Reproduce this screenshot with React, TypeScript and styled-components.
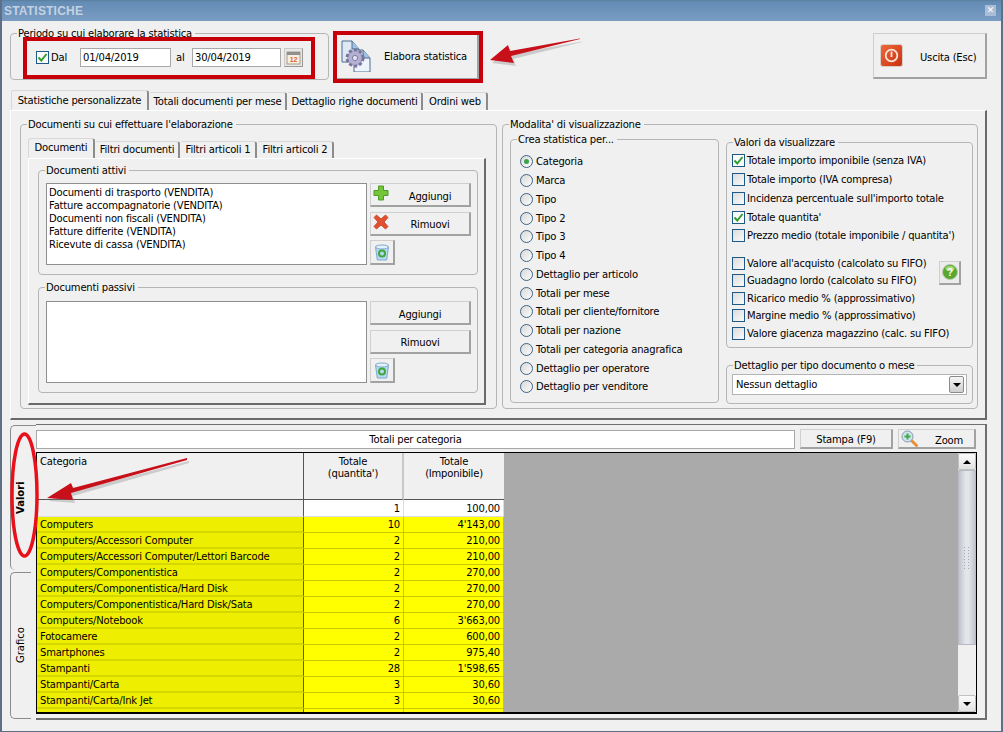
import React from 'react';
import styled, { createGlobalStyle } from 'styled-components';

const FONT = '"DejaVu Sans", "Liberation Sans", sans-serif';

const GlobalStyle = createGlobalStyle`
  * { box-sizing: border-box; }
  html, body { margin: 0; padding: 0; background: #f0f0f0; }
  body { font-family: ${FONT}; font-size: 10px; letter-spacing: -0.2px; color: #000; overflow: hidden; }
`;

const radioLabels = [
  'Categoria',
  'Marca',
  'Tipo',
  'Tipo 2',
  'Tipo 3',
  'Tipo 4',
  'Dettaglio per articolo',
  'Totali per mese',
  'Totali per cliente/fornitore',
  'Totali per nazione',
  'Totali per categoria anagrafica',
  'Dettaglio per operatore',
  'Dettaglio per venditore',
];

const valoriTop = [
  { label: 'Totale importo imponibile (senza IVA)', checked: true },
  { label: 'Totale importo (IVA compresa)', checked: false },
  { label: "Incidenza percentuale sull'importo totale", checked: false },
  { label: "Totale quantita'", checked: true },
  { label: "Prezzo medio (totale imponibile / quantita')", checked: false },
];

const valoriBottom = [
  "Valore all'acquisto (calcolato su FIFO)",
  'Guadagno lordo (calcolato su FIFO)',
  'Ricarico medio % (approssimativo)',
  'Margine medio % (approssimativo)',
  'Valore giacenza magazzino (calc. su FIFO)',
];

const documentiAttivi = [
  'Documenti di trasporto (VENDITA)',
  'Fatture accompagnatorie (VENDITA)',
  'Documenti non fiscali (VENDITA)',
  'Fatture differite (VENDITA)',
  'Ricevute di cassa (VENDITA)',
];

const rows = [
  ['Computers', '10', "4'143,00"],
  ['Computers/Accessori Computer', '2', '210,00'],
  ['Computers/Accessori Computer/Lettori Barcode', '2', '210,00'],
  ['Computers/Componentistica', '2', '270,00'],
  ['Computers/Componentistica/Hard Disk', '2', '270,00'],
  ['Computers/Componentistica/Hard Disk/Sata', '2', '270,00'],
  ['Computers/Notebook', '6', "3'663,00"],
  ['Fotocamere', '2', '600,00'],
  ['Smartphones', '2', '975,40'],
  ['Stampanti', '28', "1'598,65"],
  ['Stampanti/Carta', '3', '30,60'],
  ['Stampanti/Carta/Ink Jet', '3', '30,60'],
  ['Stampanti/Consumabili', '25', '875,90'],
];

const GearDocIcon = () => (
  <svg width="32" height="32" viewBox="0 0 32 32">
    <path d="M2 1h10l7 8v13H2z" fill="#dfe9f6" stroke="#4e6d8f" />
    <path d="M12 1v8h7" fill="#9fc4e6" stroke="#4e6d8f" />
    <path d="M14 10h9l7 8v14H14z" fill="#eef4fb" stroke="#4e6d8f" />
    <path d="M23 10v8h7" fill="#9fc4e6" stroke="#4e6d8f" />
    <circle cx="15" cy="18" r="8" fill="#a9a6cb" stroke="#77749c" strokeWidth="3" strokeDasharray="3 2.2" />
    <circle cx="15" cy="18" r="6.5" fill="#b3b0d2" />
    <circle cx="15" cy="18" r="2.6" fill="#e4e3f0" stroke="#7f7ca5" />
  </svg>
);

const PowerIcon = () => (
  <svg width="23" height="23" viewBox="0 0 23 23">
    <defs>
      <linearGradient id="pw" x1="0" y1="0" x2="1" y2="1">
        <stop offset="0" stopColor="#f0683a" />
        <stop offset="1" stopColor="#c9300f" />
      </linearGradient>
    </defs>
    <rect x="0.5" y="0.5" width="22" height="22" rx="2.5" fill="url(#pw)" stroke="#d8d0c8" />
    <circle cx="11.5" cy="11.5" r="5.8" fill="none" stroke="#fbe6dc" strokeWidth="1.8" />
    <rect x="10.6" y="7.5" width="1.8" height="5.5" fill="#fbe6dc" />
  </svg>
);

const PlusIcon = () => (
  <svg width="16" height="16" viewBox="0 0 16 16">
    <path d="M5.5 1h5v4.500H15v5h-4.500V15h-5v-4.500H1v-5h4.500z" fill="#73c63a" stroke="#4d9a27" />
  </svg>
);

const CrossIcon = () => (
  <svg width="16" height="16" viewBox="0 0 16 16">
    <path d="M1 3.500 3.500 1 8 5l4.500-4L15 3.500 11 8l4 4.500-2.500 2.500L8 11l-4.500 4L1 12.500 5 8z" fill="#e2512f" stroke="#c23a1e" strokeWidth="0.8" />
  </svg>
);

const BinIcon = () => (
  <svg width="16" height="17" viewBox="0 0 16 17">
    <path d="M1.500 3h13l-1.800 13H3.300z" fill="#b7d9f3" stroke="#7da9cc" />
    <ellipse cx="8" cy="3" rx="6.500" ry="2" fill="#e6f2fb" stroke="#7da9cc" />
    <circle cx="8" cy="9.500" r="3" fill="none" stroke="#3fa83a" strokeWidth="2" />
  </svg>
);

const ZoomIcon = () => (
  <svg width="17" height="17" viewBox="0 0 17 17">
    <path d="M10 10l5.500 5.500" stroke="#e6913a" strokeWidth="3" strokeLinecap="round" />
    <circle cx="6.500" cy="6.500" r="5.500" fill="#cfe3f2" stroke="#8398aa" />
    <path d="M5.500 3.500h2v2h2v2h-2v2h-2v-2h-2v-2h2z" fill="#3cb043" />
  </svg>
);

const HelpIcon = () => (
  <svg width="16" height="16" viewBox="0 0 16 16">
    <circle cx="8" cy="8" r="7.500" fill="#5aa72e" stroke="#b7c9ad" />
    <ellipse cx="8" cy="4.500" rx="4.500" ry="2.500" fill="#a4d97c" />
    <text x="8" y="12" textAnchor="middle" fontSize="10" fontWeight="700" fill="#fff" fontFamily="Liberation Sans, sans-serif">?</text>
  </svg>
);

const CalendarIcon = () => (
  <svg width="15" height="15" viewBox="0 0 15 15">
    <rect x="1" y="2" width="13" height="12" fill="#f7efe2" stroke="#a89a88" />
    <rect x="1" y="2" width="13" height="3" fill="#8f8f8f" />
    <text x="7.500" y="12" textAnchor="middle" fontSize="7" fontWeight="700" fill="#e0662b" fontFamily="Liberation Sans, sans-serif">12</text>
  </svg>
);

const CheckMark = () => (
  <svg width="11" height="11" viewBox="0 0 11 11">
    <path d="M1.500 5.500 4.300 8.500 9.500 2" fill="none" stroke="#2f9e2f" strokeWidth="2" />
  </svg>
);

const GripDots = () => (
  <svg width="8" height="22" viewBox="0 0 8 22">
    {[0, 1, 2, 3, 4, 5, 6, 7].map((i) => (
      <g key={i} fill="#a4a7b0">
        <rect x="1" y={i * 3} width="1" height="1" />
        <rect x="5" y={i * 3} width="1" height="1" />
      </g>
    ))}
  </svg>
);

type GroupProps = {
  legend: string;
  width: number;
  height: number;
  pad: string;
  children?: React.ReactNode;
};

const Group: React.FC<GroupProps> = ({ legend, width, height, pad, children }) => (
  <GroupBox $width={width} $height={height}>
    <Legend>{legend}</Legend>
    <GroupBody $pad={pad}>{children}</GroupBody>
  </GroupBox>
);

export default function App() {
  return (
    <Page>
      <GlobalStyle />
      <TitleBar>
        <TitleText>STATISTICHE</TitleText>
        <CloseBox>✕</CloseBox>
      </TitleBar>
      <Body>
        <TopRow>
          <Group legend="Periodo su cui elaborare la statistica" width={319} height={53} pad="8px 0 0 25px">
            <PeriodRow>
              <CheckBox $checked>
                <CheckMark />
              </CheckBox>
              <DalLabel>Dal</DalLabel>
              <DateInput $width={91}>01/04/2019</DateInput>
              <AlLabel>al</AlLabel>
              <DateInput $width={89}>30/04/2019</DateInput>
              <CalendarButton>
                <CalendarIcon />
              </CalendarButton>
            </PeriodRow>
          </Group>
          <ElaboraButton>
            <GearDocIcon />
            <span>Elabora statistica</span>
          </ElaboraButton>
          <UscitaButton>
            <PowerIcon />
            <span>Uscita (Esc)</span>
          </UscitaButton>
        </TopRow>

        <MainTabs>
          <MainTab $active $width={138}>Statistiche personalizzate</MainTab>
          <MainTab $width={138}>Totali documenti per mese</MainTab>
          <MainTab $width={136}>Dettaglio righe documenti</MainTab>
          <MainTab $width={65}>Ordini web</MainTab>
        </MainTabs>
        <MainPage>
          <Group legend="Documenti su cui effettuare l'elaborazione" width={477} height={291} pad="7px 0 0 7px">
            <InnerTabs>
              <InnerTab $active $width={67}>Documenti</InnerTab>
              <InnerTab $width={85}>Filtri documenti</InnerTab>
              <InnerTab $width={77}>Filtri articoli 1</InnerTab>
              <InnerTab $width={77}>Filtri articoli 2</InnerTab>
            </InnerTabs>
            <InnerPage>
              <Group legend="Documenti attivi" width={440} height={111} pad="6px 0 0 7px">
                <DocRow>
                  <ListBox>
                    {documentiAttivi.map((d) => (
                      <div key={d}>{d}</div>
                    ))}
                  </ListBox>
                  <ButtonColumn>
                    <ActionButton $withIcon>
                      <IconSlot><PlusIcon /></IconSlot>
                      Aggiungi
                    </ActionButton>
                    <ActionButton $withIcon>
                      <IconSlot><CrossIcon /></IconSlot>
                      Rimuovi
                    </ActionButton>
                    <BinButton><BinIcon /></BinButton>
                  </ButtonColumn>
                </DocRow>
              </Group>
              <Group legend="Documenti passivi" width={440} height={112} pad="7px 0 0 7px">
                <DocRow>
                  <ListBox />
                  <ButtonColumn>
                    <ActionButton>Aggiungi</ActionButton>
                    <ActionButton>Rimuovi</ActionButton>
                    <BinButton><BinIcon /></BinButton>
                  </ButtonColumn>
                </DocRow>
              </Group>
            </InnerPage>
          </Group>

          <Group legend="Modalita' di visualizzazione" width={476} height={291} pad="2px 0 0 7px">
            <ModeColumns>
              <Group legend="Crea statistica per..." width={209} height={270} pad="6.4px 0 0 9px">
                <OptionList $step={18.75}>
                  {radioLabels.map((label, i) => (
                    <OptionRow key={label}>
                      <Radio $selected={i === 0} />
                      {label}
                    </OptionRow>
                  ))}
                </OptionList>
              </Group>
              <RightColumn>
                <Group legend="Valori da visualizzare" width={247} height={212} pad="2.4px 0 0 5px">
                  <OptionList $step={18.75}>
                    {valoriTop.map((v) => (
                      <OptionRow key={v.label}>
                        <CheckBox $checked={v.checked}>{v.checked && <CheckMark />}</CheckBox>
                        {v.label}
                      </OptionRow>
                    ))}
                  </OptionList>
                  <FifoBlock>
                    <OptionList $step={17.5} $width={207}>
                      {valoriBottom.map((label) => (
                        <OptionRow key={label}>
                          <CheckBox />
                          {label}
                        </OptionRow>
                      ))}
                    </OptionList>
                    <HelpButton><HelpIcon /></HelpButton>
                  </FifoBlock>
                </Group>
                <Group legend="Dettaglio per tipo documento o mese" width={247} height={45} pad="2px 0 0 5px">
                  <Combo>
                    Nessun dettaglio
                    <ComboArrow>
                      <Triangle />
                    </ComboArrow>
                  </Combo>
                </Group>
              </RightColumn>
            </ModeColumns>
          </Group>
        </MainPage>

        <BottomPanel>
          <Rail>
            <RailTab $active>Valori</RailTab>
            <RailTab>Grafico</RailTab>
          </Rail>
          <ResultArea>
            <ResultToolbar>
              <ResultTitle>Totali per categoria</ResultTitle>
              <ToolButton $width={93}>Stampa (F9)</ToolButton>
              <ZoomButton>
                <ZoomIcon />
                <span>Zoom</span>
              </ZoomButton>
            </ResultToolbar>
            <GridFrame>
              <GridTable>
                <HeaderCell>Categoria</HeaderCell>
                <HeaderCell $center>Totale<br />(quantita')</HeaderCell>
                <HeaderCell $center>Totale<br />(Imponibile)</HeaderCell>
                <TotalLabel />
                <TotalCell>1</TotalCell>
                <TotalCell>100,00</TotalCell>
                {rows.map((r) => (
                  <React.Fragment key={r[0]}>
                    <NameCell>{r[0]}</NameCell>
                    <ValueCell>{r[1]}</ValueCell>
                    <ValueCell>{r[2]}</ValueCell>
                  </React.Fragment>
                ))}
              </GridTable>
              <GridEmpty />
              <ScrollBar>
                <ScrollButton><Triangle $up /></ScrollButton>
                <ScrollThumb><GripDots /></ScrollThumb>
                <ScrollTrack />
                <ScrollButton><Triangle /></ScrollButton>
              </ScrollBar>
            </GridFrame>
          </ResultArea>
        </BottomPanel>
      </Body>

      <RedFrame $left={23} $top={37} $width={292} $height={42} />
      <RedFrame $left={333} $top={31} $width={150} $height={52} />
      <Annotations width="1003" height="732" viewBox="0 0 1003 732">
        <g fill="#888" opacity="0.35" transform="translate(2 3)">
          <path d="M580 38.500 510 51l-2-6-18 15 24 3-3-7 69-17z" />
          <path d="M187 458 73 488l-2-5-24 15 26 2-2-7 116-33z" />
        </g>
        <path d="M580 38.500 510 51l-2-6-18 15 24 3-3-7 69-17z" fill="#c8101a" />
        <path d="M187 458 73 488l-2-5-24 15 26 2-2-7 116-33z" fill="#c8101a" />
        <ellipse cx="24.500" cy="495" rx="12.500" ry="61" fill="none" stroke="#e8101a" strokeWidth="3.500" />
      </Annotations>
    </Page>
  );
}

const Page = styled.div`
  position: relative;
  width: 1003px;
  height: 732px;
  background: #f0f0f0;
  border-left: 2px solid #5f6f84;
  border-right: 2px solid #5f6f84;
  border-bottom: 1px solid #5f6f84;
  overflow: hidden;
`;

const TitleBar = styled.div`
  height: 21px;
  margin: 0 -2px;
  padding: 0 7px 0 4px;
  display: flex;
  align-items: center;
  justify-content: space-between;
  background: linear-gradient(#58809f 0, #648cb5 2px, #7a9cc2 100%);
`;

const TitleText = styled.div`
  font-family: "Liberation Sans", sans-serif;
  font-size: 12px;
  font-weight: 700;
  letter-spacing: 0.2px;
  color: #c3d2e3;
`;

const CloseBox = styled.div`
  width: 11px;
  height: 11px;
  background: #a9bed6;
  color: #fff;
  font-size: 9px;
  line-height: 11px;
  font-weight: 700;
  text-align: center;
`;

const Body = styled.div`
  padding: 6px 14px 0 8px;
  display: flex;
  flex-direction: column;
`;

const TopRow = styled.div`
  display: flex;
  align-items: flex-end;
  height: 53px;
`;

const GroupBox = styled.fieldset<{ $width: number; $height: number }>`
  width: ${(p) => p.$width}px;
  height: ${(p) => p.$height}px;
  flex: none;
  margin: 0;
  padding: 0;
  min-width: 0;
  border: 1px solid #b5b5b5;
  border-radius: 4px;
`;

const GroupBody = styled.div<{ $pad: string }>`
  padding: ${(p) => p.$pad};
`;

const Legend = styled.legend`
  margin-left: 6px;
  padding: 0 3px 0 1px;
  height: 13px;
  line-height: 13px;
  white-space: nowrap;
`;

const PeriodRow = styled.div`
  display: flex;
  align-items: center;
  height: 19px;
`;

const CheckBox = styled.div<{ $checked?: boolean }>`
  width: 13px;
  height: 13px;
  flex: none;
  display: flex;
  align-items: center;
  justify-content: center;
  border: 1px solid #1e5a88;
  background: ${(p) => (p.$checked ? '#fbfbfb' : 'linear-gradient(135deg, #dcdcdc, #fafafa)')};
`;

const DalLabel = styled.span`
  margin-left: 2px;
  width: 29px;
`;

const AlLabel = styled.span`
  width: 21px;
  padding-left: 5px;
`;

const DateInput = styled.div<{ $width: number }>`
  width: ${(p) => p.$width}px;
  height: 19px;
  padding-left: 2px;
  line-height: 18px;
  flex: none;
  background: #fff;
  border: 1px solid #a8a8a8;
`;

const CalendarButton = styled.div`
  width: 19px;
  height: 19px;
  margin-left: 3px;
  display: flex;
  align-items: center;
  justify-content: center;
  background: #e8e8e8;
  border: 1px solid #c8c8c8;
  border-right-color: #999;
  border-bottom-color: #999;
`;

const RaisedButton = styled.div`
  display: flex;
  align-items: center;
  flex: none;
  background: #f0f0f0;
  border: 1px solid #cfcfcf;
  border-right: 2px solid #a2a2a2;
  border-bottom: 2px solid #a2a2a2;
`;

const ElaboraButton = styled(RaisedButton)`
  width: 144px;
  height: 47px;
  margin-left: 6px;
  padding-left: 4px;
  gap: 12px;
  span { white-space: nowrap; }
`;

const UscitaButton = styled(RaisedButton)`
  width: 114px;
  height: 46px;
  margin-left: auto;
  margin-bottom: 1px;
  padding-left: 6px;
  gap: 17px;
  span { white-space: nowrap; padding-top: 3px; }
`;

const MainTabs = styled.div`
  display: flex;
  align-items: flex-end;
  height: 20px;
  margin-top: 10px;
  padding-left: 1px;
`;

const MainTab = styled.div<{ $active?: boolean; $width: number }>`
  width: ${(p) => p.$width}px;
  height: ${(p) => (p.$active ? 20 : 18)}px;
  text-align: center;
  line-height: ${(p) => (p.$active ? 19 : 18)}px;
  white-space: nowrap;
  background: #f0f0f0;
  border-top: 1px solid #d8d8d8;
  border-left: 1px solid ${(p) => (p.$active ? '#d8d8d8' : '#f0f0f0')};
  border-right: 2px solid #8c8c8c;
  border-radius: 3px 3px 0 0;
`;

const MainPage = styled.div`
  width: 977px;
  height: 310px;
  padding: 7px 0 0 9px;
  display: flex;
  gap: 5px;
  border-top: 1px solid #fff;
  border-left: 1px solid #fff;
  border-right: 2px solid #6a6a6a;
  border-bottom: 2px solid #6a6a6a;
`;

const InnerTabs = styled.div`
  display: flex;
  align-items: flex-end;
  height: 20px;
`;

const InnerTab = styled.div<{ $active?: boolean; $width: number }>`
  width: ${(p) => p.$width}px;
  height: ${(p) => (p.$active ? 20 : 17)}px;
  text-align: center;
  line-height: ${(p) => (p.$active ? 17 : 16)}px;
  white-space: nowrap;
  background: #f0f0f0;
  border-top: 1px solid #d8d8d8;
  border-left: 1px solid ${(p) => (p.$active ? '#d8d8d8' : '#f0f0f0')};
  border-right: 2px solid #8c8c8c;
  border-radius: 3px 3px 0 0;
`;

const InnerPage = styled.div`
  width: 458px;
  height: 247px;
  padding: 5px 0 0 9px;
  display: flex;
  flex-direction: column;
  gap: 6px;
  border-top: 1px solid #fff;
  border-left: 1px solid #fff;
  border-right: 2px solid #6a6a6a;
  border-bottom: 2px solid #6a6a6a;
`;

const DocRow = styled.div`
  display: flex;
  gap: 3px;
`;

const ListBox = styled.div`
  width: 321px;
  height: 82px;
  flex: none;
  padding: 2px 2px;
  line-height: 13px;
  background: #fff;
  border: 1px solid #8f8f8f;
`;

const ButtonColumn = styled.div`
  display: flex;
  flex-direction: column;
  align-items: flex-start;
  gap: 4.500px;
`;

const ActionButton = styled(RaisedButton)<{ $withIcon?: boolean }>`
  position: relative;
  width: 101px;
  height: 24px;
  justify-content: center;
  padding-top: 3px;
  padding-left: ${(p) => (p.$withIcon ? 20 : 0)}px;
`;

const IconSlot = styled.span`
  position: absolute;
  left: 2px;
  top: 1px;
  display: flex;
`;

const BinButton = styled(RaisedButton)`
  width: 25px;
  height: 25px;
  justify-content: center;
`;

const ModeColumns = styled.div`
  display: flex;
  gap: 7px;
`;

const RightColumn = styled.div`
  display: flex;
  flex-direction: column;
  gap: 11px;
  margin-top: 3px;
`;

const OptionList = styled.div<{ $step: number; $width?: number }>`
  display: grid;
  grid-auto-rows: ${(p) => p.$step}px;
  ${(p) => (p.$width ? `width: ${p.$width}px; flex: none;` : '')}
`;

const OptionRow = styled.div`
  display: flex;
  align-items: center;
  gap: 2px;
  white-space: nowrap;
`;

const Radio = styled.div<{ $selected?: boolean }>`
  position: relative;
  width: 13px;
  height: 13px;
  margin-right: 1px;
  flex: none;
  border: 1px solid #3e6388;
  border-radius: 50%;
  background: linear-gradient(135deg, #d8d8d8, #fcfcfc);

  &::after {
    content: '';
    display: ${(p) => (p.$selected ? 'block' : 'none')};
    position: absolute;
    left: 3px;
    top: 3px;
    width: 5px;
    height: 5px;
    border-radius: 50%;
    background: #3ba24a;
  }
`;

const FifoBlock = styled.div`
  display: flex;
  align-items: flex-start;
  margin-top: 9.600px;
`;

const HelpButton = styled(RaisedButton)`
  width: 22px;
  height: 24px;
  margin-top: 6px;
  justify-content: center;
  background: #ececec;
`;

const Combo = styled.div`
  position: relative;
  width: 235px;
  height: 21px;
  padding-left: 3px;
  line-height: 20px;
  background: #fff;
  border: 1px solid #b4b4b4;
`;

const ComboArrow = styled.div`
  position: absolute;
  right: 2px;
  top: 1px;
  width: 15px;
  height: 17px;
  display: flex;
  align-items: center;
  justify-content: center;
  background: linear-gradient(#f6f6f6, #cfcfcf);
  border: 1px solid #8a8a8a;
  border-radius: 2px;
`;

const Triangle = styled.div<{ $up?: boolean }>`
  width: 0;
  height: 0;
  border-left: 4px solid transparent;
  border-right: 4px solid transparent;
  ${(p) => (p.$up ? 'border-bottom: 4px solid #000;' : 'border-top: 4px solid #000;')}
`;

const BottomPanel = styled.div`
  display: flex;
  width: 977px;
  height: 296px;
  margin-top: 4px;
`;

const Rail = styled.div`
  width: 26px;
  flex: none;
  display: flex;
  flex-direction: column;
  gap: 2px;
  padding-top: 1px;
`;

const RailTab = styled.div<{ $active?: boolean }>`
  writing-mode: vertical-rl;
  transform: rotate(180deg);
  width: ${(p) => (p.$active ? 26 : 21)}px;
  height: ${(p) => (p.$active ? 145 : 147)}px;
  text-align: center;
  line-height: 20px;
  letter-spacing: 0;
  font-weight: ${(p) => (p.$active ? 700 : 400)};
  background: #f0f0f0;
  border-right: 1px solid #8c8c8c;
  border-top: ${(p) => (p.$active ? 'none' : '1px solid #8c8c8c')};
  border-bottom: 1px solid #8c8c8c;
  border-radius: 0 5px 5px 0;
  align-self: flex-start;
`;

const ResultArea = styled.div`
  flex: 1;
  min-width: 0;
  padding-top: 5px;
  border-top: 1px solid #6f6f6f;
  border-right: 2px solid #6f6f6f;
  border-bottom: 2px solid #6f6f6f;
`;

const ResultToolbar = styled.div`
  display: flex;
  align-items: flex-start;
  height: 20px;
`;

const ResultTitle = styled.div`
  width: 759px;
  height: 19px;
  text-align: center;
  line-height: 18px;
  background: #fff;
  border: 1px solid #a8a8a8;
`;

const ToolButton = styled(RaisedButton)<{ $width: number }>`
  width: ${(p) => p.$width}px;
  height: 20px;
  margin-left: 5px;
  margin-top: -1px;
  padding-top: 1px;
  justify-content: center;
`;

const ZoomButton = styled(RaisedButton)`
  position: relative;
  width: 78px;
  height: 20px;
  margin-left: 5px;
  margin-top: -1px;
  padding: 3px 0 0 36px;
  svg { position: absolute; left: 2px; top: 0; }
`;

const GridFrame = styled.div`
  display: flex;
  width: 941px;
  height: 262px;
  margin-top: 2px;
  overflow: hidden;
  background: #aaa;
  border: 1px solid #000;
  border-bottom-width: 2px;
`;

const GridTable = styled.div`
  display: grid;
  grid-template-columns: 267px 100px 100px;
  grid-template-rows: 47px 17px;
  grid-auto-rows: 16px;
  flex: none;
  align-content: start;
  width: 467px;
`;

const HeaderCell = styled.div<{ $center?: boolean }>`
  padding: 3px 3px 0;
  line-height: 12px;
  text-align: ${(p) => (p.$center ? 'center' : 'left')};
  background: #f0f0f0;
  border-right: 1px solid #555;
  border-bottom: 1px solid #555;

  &:nth-child(2) { border-right: 2px solid #c8c8c8; }
  &:nth-child(3) { border-right: none; }
`;

const TotalLabel = styled.div`
  background: #f0f0f0;
  border-right: 1px solid #555;
  border-bottom: 1px solid #ddd;
`;

const TotalCell = styled.div`
  padding-right: 3px;
  text-align: right;
  line-height: 17px;
  background: #fff;
  border-right: 1px solid #ddd;
  border-bottom: 1px solid #ddd;
`;

const NameCell = styled.div`
  padding-left: 3px;
  line-height: 15px;
  white-space: nowrap;
  background: #eeee00;
  border-right: 1px solid #555;
  border-bottom: 2px solid #d6d600;
`;

const ValueCell = styled.div`
  padding-right: 3px;
  text-align: right;
  line-height: 15px;
  background: #ffff00;
  border-right: 1px solid #c9c900;
  border-bottom: 1px solid #c9c900;
`;

const GridEmpty = styled.div`
  flex: 1;
`;

const ScrollBar = styled.div`
  width: 18px;
  flex: none;
  display: flex;
  flex-direction: column;
  background: #f0f0f0;
`;

const ScrollButton = styled.div`
  height: 17px;
  flex: none;
  display: flex;
  align-items: center;
  justify-content: center;
  background: linear-gradient(#fafafa, #e2e2e2);
  border: 1px solid #c0c0c0;
  border-radius: 2px;
`;

const ScrollThumb = styled.div`
  height: 175px;
  flex: none;
  display: flex;
  align-items: center;
  justify-content: center;
  background: linear-gradient(90deg, #bfc2cb, #e4e5ea 40%, #e4e5ea 60%, #c3c6cf);
  border: 1px solid #b8bbc4;
`;

const ScrollTrack = styled.div`
  flex: 1;
`;

const RedFrame = styled.div<{ $left: number; $top: number; $width: number; $height: number }>`
  position: absolute;
  left: ${(p) => p.$left - 2}px;
  top: ${(p) => p.$top}px;
  width: ${(p) => p.$width}px;
  height: ${(p) => p.$height}px;
  border: 4px solid #c8000a;
  pointer-events: none;
`;

const Annotations = styled.svg`
  position: absolute;
  left: -2px;
  top: 0;
  pointer-events: none;
`;
